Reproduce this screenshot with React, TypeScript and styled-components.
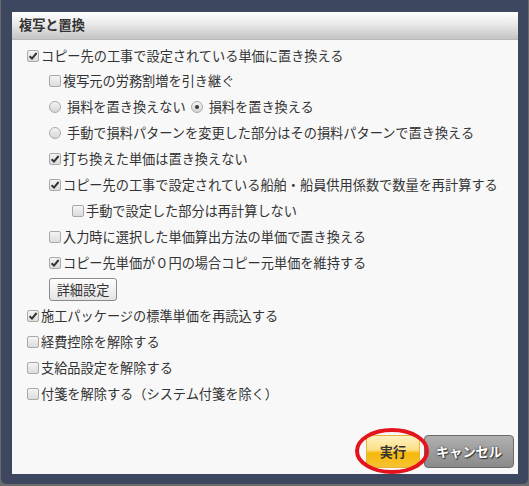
import React from "react";
import styled, { createGlobalStyle } from "styled-components";

const GlobalStyle = createGlobalStyle`
  html, body { margin: 0; padding: 0; background: #6c6c6c; }
  body { font-family: "Noto Sans CJK JP", "Noto Sans", sans-serif; }
  * { box-sizing: border-box; }
`;

const Frame = styled.div`
  width: 527px;
  height: 484px;
  margin: 0 1px 0 1px;
  padding: 12px 10px 10px 11px;
  background: #3d4760;
  border-radius: 0 0 5px 5px;
`;

const Dialog = styled.div`
  position: relative;
  width: 506px;
  height: 462px;
  background: #f8f8f8;
  display: flex;
  flex-direction: column;
  color: #333;
  font-size: 13.2px;
`;

const Header = styled.div`
  height: 28px;
  flex: none;
  display: flex;
  align-items: center;
  padding-left: 7px;
  background: linear-gradient(#ffffff 0%, #ececec 40%, #c4c4c4 100%);
  border-bottom: 1px solid #b9b9b9;
`;

const Title = styled.div`
  font-weight: bold;
  font-size: 13.2px;
  color: #333;
  line-height: 1;
  padding-bottom: 1px;
`;

const Body = styled.div`
  padding-top: 3px;
  display: flex;
  flex-direction: column;
  flex: 1;
`;

const Row = styled.div<{ $level: number; $h?: number }>`
  display: flex;
  align-items: center;
  height: ${(p) => p.$h ?? 26}px;
  padding-left: ${(p) => [15, 37, 60][p.$level]}px;
  white-space: nowrap;
`;

const Box = styled.span`
  width: 12px;
  height: 12px;
  flex: none;
  margin-right: 2px;
  border: 1px solid #a9a9a9;
  border-radius: 2px;
  background: linear-gradient(#f4f4f4, #dcdcdc);
  display: flex;
  align-items: center;
  justify-content: center;
`;

const Circle = styled.span<{ $on?: boolean }>`
  width: 12px;
  height: 12px;
  flex: none;
  margin-right: 6px;
  border: 1px solid #a9a9a9;
  border-radius: 50%;
  background: linear-gradient(#f4f4f4, #d6d6d6);
  display: flex;
  align-items: center;
  justify-content: center;
  &::after {
    content: "";
    display: ${(p) => (p.$on ? "block" : "none")};
    width: 4px;
    height: 4px;
    border-radius: 50%;
    background: #3a3a3a;
  }
`;

const Label = styled.span<{ $gap?: number }>`
  line-height: 1;
  margin-right: ${(p) => p.$gap ?? 0}px;
`;

const DetailButton = styled.button`
  height: 23px;
  width: 68px;
  padding: 0;
  font: inherit;
  color: #333;
  border: 1px solid #8a8a8a;
  border-radius: 3px;
  background: linear-gradient(#fdfdfd, #e4e4e4);
`;

const Footer = styled.div`
  margin-top: auto;
  display: flex;
  justify-content: flex-end;
  gap: 4px;
  padding: 0 4px 6px 0;
`;

const ExecButton = styled.button`
  width: 54px;
  height: 33px;
  padding: 0;
  font: inherit;
  font-weight: bold;
  color: #333;
  border: 1px solid #e9b23a;
  border-radius: 3px;
  background: linear-gradient(#fff1c2 0%, #fddf86 45%, #f6b90a 55%, #f7c233 100%);
`;

const CancelButton = styled.button`
  width: 90px;
  height: 33px;
  padding: 0;
  font: inherit;
  font-weight: bold;
  color: #fff;
  text-shadow: 0 0 2px #333, 1px 1px 1px #333;
  border: 1px solid #6a6a6a;
  border-radius: 4px;
  background: linear-gradient(#b0b0b0, #8a8a8a);
`;

const Annotation = styled.svg`
  position: absolute;
  left: 343px;
  top: 416px;
  overflow: visible;
  pointer-events: none;
`;

const Check = ({ on }: { on?: boolean }) => (
  <Box>
    {on && (
      <svg width="10" height="10" viewBox="0 0 10 10">
        <path d="M1.6 5.2 L4 7.6 L8.6 2" stroke="#333" strokeWidth="2" fill="none" />
      </svg>
    )}
  </Box>
);

type Item = { level: number; on?: boolean; text: string; h?: number };

const topItems: Item[] = [
  { level: 0, on: true, text: "コピー先の工事で設定されている単価に置き換える", h: 25 },
  { level: 1, text: "複写元の労務割増を引き継ぐ" },
];

const midItems: Item[] = [
  { level: 1, on: true, text: "打ち換えた単価は置き換えない" },
  { level: 1, on: true, text: "コピー先の工事で設定されている船舶・船員供用係数で数量を再計算する" },
  { level: 2, text: "手動で設定した部分は再計算しない" },
  { level: 1, text: "入力時に選択した単価算出方法の単価で置き換える" },
  { level: 1, on: true, text: "コピー先単価が０円の場合コピー元単価を維持する" },
];

const bottomItems: Item[] = [
  { level: 0, on: true, text: "施工パッケージの標準単価を再読込する" },
  { level: 0, text: "経費控除を解除する" },
  { level: 0, text: "支給品設定を解除する" },
  { level: 0, text: "付箋を解除する（システム付箋を除く）" },
];

const CheckRow = ({ item }: { item: Item }) => (
  <Row $level={item.level} $h={item.h}>
    <Check on={item.on} />
    <Label>{item.text}</Label>
  </Row>
);

export default function App() {
  return (
    <>
      <GlobalStyle />
      <Frame>
        <Dialog>
          <Header>
            <Title>複写と置換</Title>
          </Header>
          <Body>
            {topItems.map((it) => (
              <CheckRow key={it.text} item={it} />
            ))}
            <Row $level={1}>
              <Circle />
              <Label $gap={5}>損料を置き換えない</Label>
              <Circle $on />
              <Label>損料を置き換える</Label>
            </Row>
            <Row $level={1}>
              <Circle />
              <Label>手動で損料パターンを変更した部分はその損料パターンで置き換える</Label>
            </Row>
            {midItems.map((it) => (
              <CheckRow key={it.text} item={it} />
            ))}
            <Row $level={1} $h={27}>
              <DetailButton>詳細設定</DetailButton>
            </Row>
            {bottomItems.map((it) => (
              <CheckRow key={it.text} item={it} />
            ))}
          </Body>
          <Footer>
            <ExecButton>実行</ExecButton>
            <CancelButton>キャンセル</CancelButton>
          </Footer>
          <Annotation width="74" height="46" viewBox="0 0 74 46">
            <ellipse cx="37" cy="23" rx="35" ry="21" fill="none" stroke="#e5141c" strokeWidth="4" />
          </Annotation>
        </Dialog>
      </Frame>
    </>
  );
}
